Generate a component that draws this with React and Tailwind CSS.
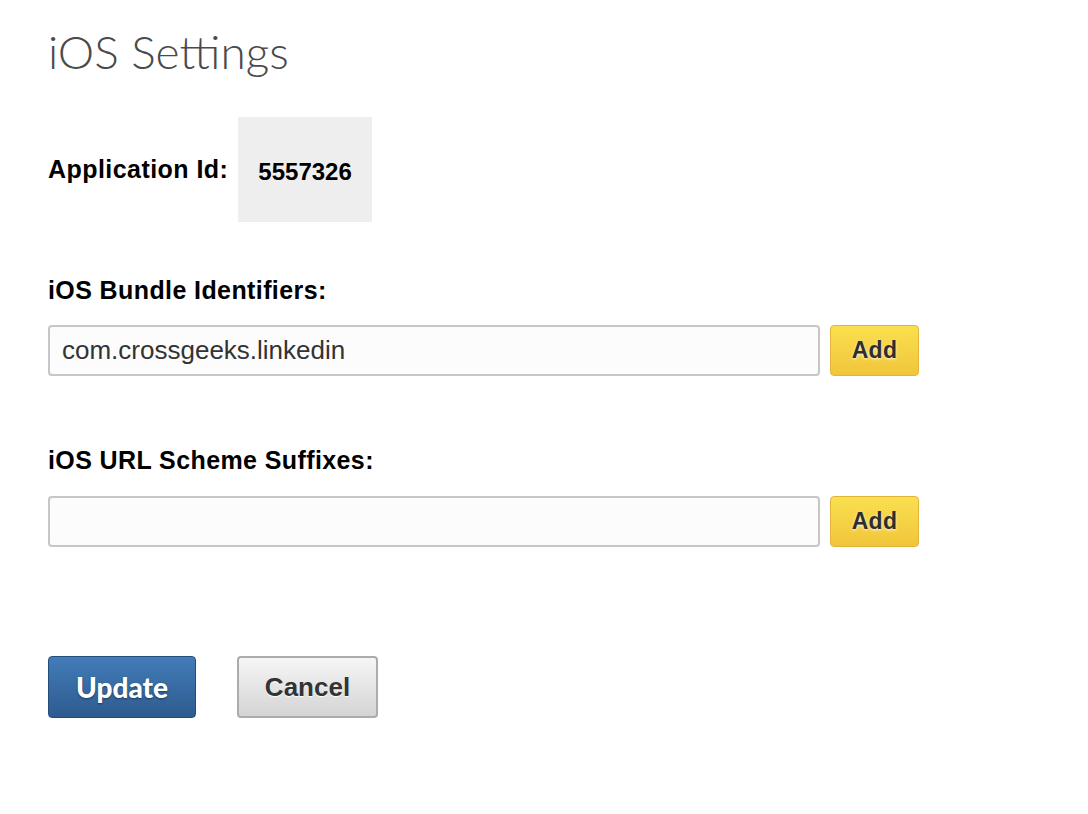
import React, { useState } from 'react';

const labelFont = { fontFamily: '"Liberation Sans", Arial, sans-serif' };

const AddButton = () => (
  <button
    type="button"
    className="h-[51px] w-[89px] rounded-[4px] border border-[#e2b43c] bg-gradient-to-b from-[#f9e04f] to-[#f1c53a] text-[23px] font-bold tracking-[0.3px] text-[#2e2e2e] [text-shadow:0_1px_3px_rgba(255,255,255,0.9)]"
    style={labelFont}
  >
    Add
  </button>
);

const App = () => {
  const [bundleId, setBundleId] = useState('com.crossgeeks.linkedin');
  const [suffix, setSuffix] = useState('');

  return (
    <div className="min-h-screen bg-white px-[48px] pt-[25px] text-black" style={labelFont}>
      <h1
        className="text-[46px] font-light leading-[54px] text-[#4a4a4a]"
        style={{ fontFamily: 'Lato, "Open Sans", sans-serif' }}
      >
        iOS Settings
      </h1>

      <div className="mt-[38px] flex items-center">
        <span className="text-[25px] font-bold tracking-[0.45px]">Application Id:</span>
        <div className="ml-[10px] flex h-[105px] w-[134px] items-center bg-[#eeeeee] pl-[20px] pt-[4px]">
          <span className="text-[24px] font-bold">5557326</span>
        </div>
      </div>

      <div className="mt-[53px]">
        <label className="block text-[25px] font-bold leading-[30px] tracking-[0.4px]">iOS Bundle Identifiers:</label>
        <div className="mt-[20px] flex items-center gap-[10px]">
          <input
            value={bundleId}
            onChange={(e) => setBundleId(e.target.value)}
            className="h-[51px] w-[772px] rounded-[4px] border-2 border-[#c6c6c6] bg-[#fcfcfc] px-[12px] text-[26px] text-[#333] outline-none"
            style={labelFont}
          />
          <AddButton />
        </div>
      </div>

      <div className="mt-[69px]">
        <label className="block text-[25px] font-bold leading-[30px] tracking-[0.4px]">iOS URL Scheme Suffixes:</label>
        <div className="mt-[21px] flex items-center gap-[10px]">
          <input
            value={suffix}
            onChange={(e) => setSuffix(e.target.value)}
            className="h-[51px] w-[772px] rounded-[4px] border-2 border-[#c6c6c6] bg-[#fcfcfc] px-[12px] text-[26px] text-[#333] outline-none"
            style={labelFont}
          />
          <AddButton />
        </div>
      </div>

      <div className="mt-[109px] flex gap-[41px]">
        <button
          type="button"
          className="h-[62px] w-[148px] rounded-[4px] border border-[#234d7a] bg-gradient-to-b from-[#437cb9] to-[#2d5b8e] text-[28px] text-white [text-shadow:0_1px_2px_rgba(0,0,0,0.45)]"
          style={{ fontFamily: 'Lato, "Liberation Sans", sans-serif', fontWeight: 900 }}
        >
          Update
        </button>
        <button
          type="button"
          className="h-[62px] w-[141px] rounded-[4px] border-2 border-[#acacac] bg-gradient-to-b from-[#f6f6f6] to-[#d4d4d4] text-[26px] font-bold text-[#333] [text-shadow:0_1px_1px_rgba(255,255,255,0.9)]"
          style={labelFont}
        >
          Cancel
        </button>
      </div>
    </div>
  );
};

export default App;
